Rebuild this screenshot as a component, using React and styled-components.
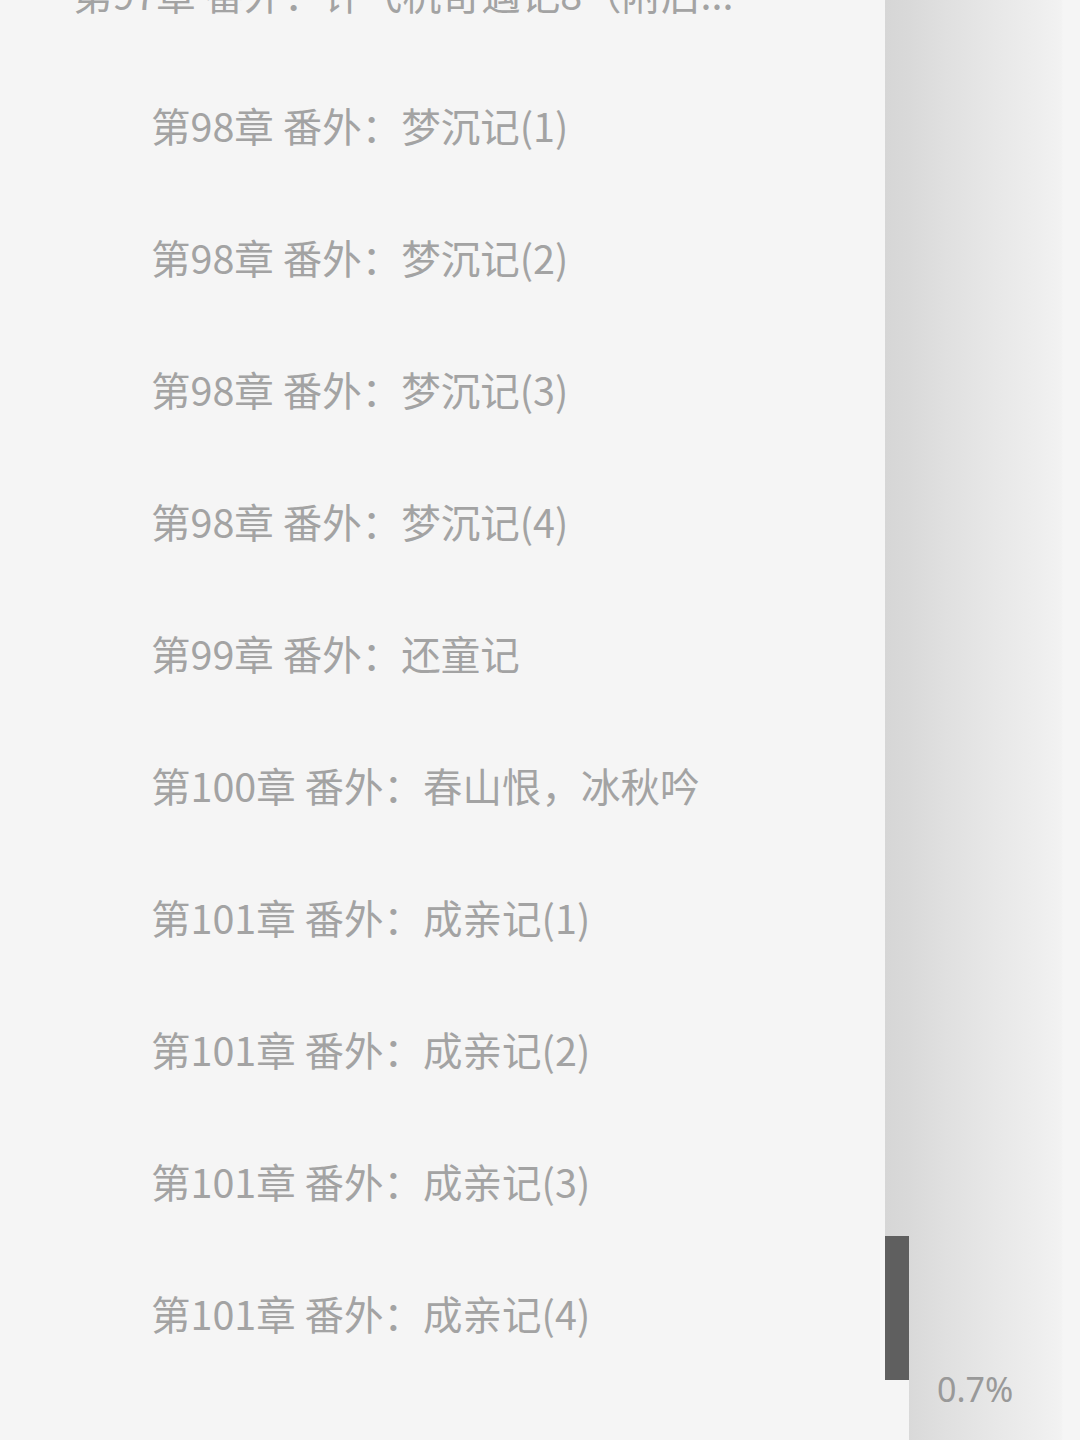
import React from 'react'
import styled, { createGlobalStyle } from 'styled-components'

const chapters = [
  { title: '第97章 番外：许飞杭奇遇记8（附后...', top: true },
  { title: '第98章 番外：梦沉记(1)' },
  { title: '第98章 番外：梦沉记(2)' },
  { title: '第98章 番外：梦沉记(3)' },
  { title: '第98章 番外：梦沉记(4)' },
  { title: '第99章 番外：还童记' },
  { title: '第100章 番外：春山恨，冰秋吟' },
  { title: '第101章 番外：成亲记(1)' },
  { title: '第101章 番外：成亲记(2)' },
  { title: '第101章 番外：成亲记(3)' },
  { title: '第101章 番外：成亲记(4)' },
]

const GlobalStyle = createGlobalStyle`
  html, body {
    margin: 0;
    padding: 0;
    background: #f5f5f5;
  }
  body {
    font-family: "Noto Sans CJK SC", "Noto Sans", sans-serif;
  }
`

const App = () => {
  return (
    <>
      <GlobalStyle />
      <Page>
        <ChapterList>
          <ListInner>
            {chapters.map((item, index) => (
              <ChapterRow key={index} $top={item.top}>
                <RowTitle>{item.title}</RowTitle>
              </ChapterRow>
            ))}
          </ListInner>
        </ChapterList>
        <SidePanel>
          <Track>
            <TrackFill />
            <Thumb />
            <TrackEnd />
          </Track>
          <ProgressPane>
            <Progress>0.7%</Progress>
          </ProgressPane>
        </SidePanel>
      </Page>
    </>
  )
}

export default App

const Page = styled.div`
  display: flex;
  width: 1080px;
  height: 1440px;
  overflow: hidden;
  background: #f5f5f5;
`

const ChapterList = styled.div`
  flex: 0 0 885px;
  overflow: hidden;
`

// list is scrolled a little past the top, so the first title is half hidden
const ListInner = styled.div`
  margin-top: -73px;
  display: flex;
  flex-direction: column;
`

const ChapterRow = styled.div`
  height: 132px;
  display: flex;
  align-items: center;
  padding-left: ${(p) => (p.$top ? '73px' : '151px')};
`

const RowTitle = styled.span`
  font-family: "Noto Sans CJK SC", "Noto Sans", sans-serif;
  font-size: 39.5px;
  line-height: 1;
  color: #a3a3a3;
  white-space: nowrap;
`

const SidePanel = styled.div`
  flex: 1;
  display: flex;
`

const Track = styled.div`
  width: 24px;
  display: flex;
  flex-direction: column;
`

const TrackFill = styled.div`
  flex: 1;
  background: linear-gradient(to right, #d6d6d6, #d9d9d9);
`

const Thumb = styled.div`
  height: 144px;
  background: #5f5f5f;
`

const TrackEnd = styled.div`
  height: 60px;
  background: #f5f5f5;
`

const ProgressPane = styled.div`
  flex: 1;
  display: flex;
  flex-direction: column;
  justify-content: flex-end;
  padding: 0 0 34px 28px;
  background: linear-gradient(
    to right,
    #d9d9d9 0%,
    #e0e0e0 22%,
    #e7e7e7 48%,
    #eeeeee 76%,
    #f2f2f2 89%,
    #f5f5f5 90%
  );
`

const Progress = styled.span`
  font-family: "Noto Sans", "Noto Sans CJK SC", sans-serif;
  font-size: 34px;
  line-height: 1;
  color: #999999;
`
